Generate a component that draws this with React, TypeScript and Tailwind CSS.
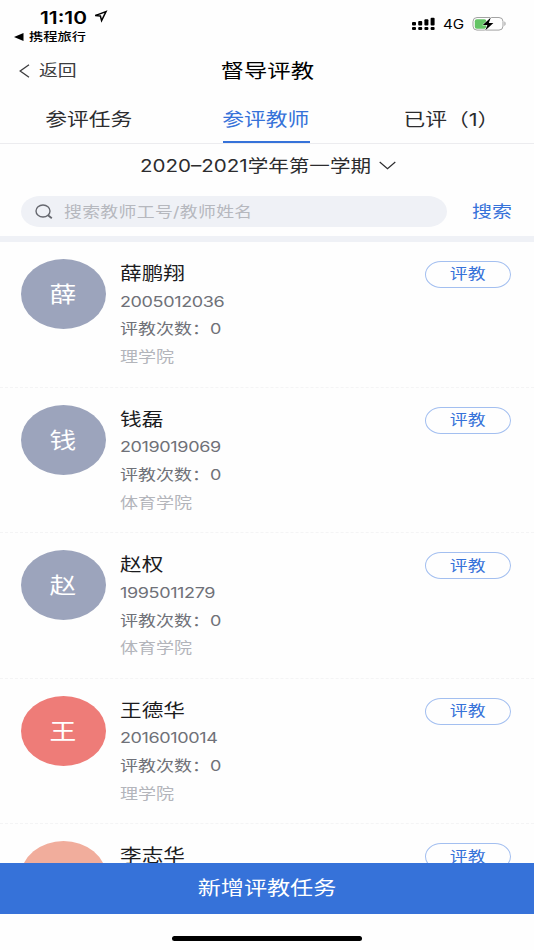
import React from 'react';

interface Teacher {
    name: string;
    color: string;
    id?: string;
    count?: number;
    college?: string;
}

const teachers: Teacher[] = [
    { name: '薛鹏翔', id: '2005012036', count: 0, college: '理学院', color: 'bg-[#9ca4bc]' },
    { name: '钱磊', id: '2019019069', count: 0, college: '体育学院', color: 'bg-[#9ca4bc]' },
    { name: '赵权', id: '1995011279', count: 0, college: '体育学院', color: 'bg-[#9ca4bc]' },
    { name: '王德华', id: '2016010014', count: 0, college: '理学院', color: 'bg-[#ee7c78]' },
    { name: '李志华', color: 'bg-[#f1ad9c]' },
];

const tabs = ['参评任务', '参评教师', '已评（1）'];

// wide lettering, grows from the left edge or from the center
function Wide({ children, center = false, className = '' }: { children: React.ReactNode; center?: boolean; className?: string }) {
    return (
        <span className={`inline-block whitespace-nowrap scale-x-[1.217] ${center ? 'origin-center' : 'origin-left'} ${className}`}>
            {children}
        </span>
    );
}

function StatusBar() {
    return (
        <div className="flex h-[47px] shrink-0 justify-between text-black">
            <div className="pl-[14px] pt-[7px]">
                <div className="flex h-[19px] items-center pl-[26px]">
                    <Wide className="w-[53px] pt-[2px] text-[17.2px] font-semibold leading-[19px]">11:10</Wide>
                    <svg className="h-[13px] w-[15px]" viewBox="0 0 15 13" fill="none" stroke="currentColor" strokeWidth="1.5" strokeLinejoin="miter">
                        <path d="M2.2 5.6 13 1.6 8.6 10.6 7.4 6Z" />
                    </svg>
                </div>
                <div className="flex h-[21px] items-center">
                    <svg className="mr-[5px] h-[8px] w-[10px]" viewBox="0 0 10 8" fill="currentColor">
                        <path d="M0 4 9.5 0V8Z" />
                    </svg>
                    <Wide className="pt-px text-[11.7px] font-medium leading-[20px]">携程旅行</Wide>
                </div>
            </div>
            <div className="flex h-[47px] items-center pr-[27px]">
                <svg className="h-[14px] w-[23px]" viewBox="0 0 23 14" fill="currentColor">
                    <rect x="0" y="5" width="4" height="3.5" rx="1" />
                    <rect x="6.2" y="4" width="4" height="4.5" rx="1" />
                    <rect x="12.4" y="2.3" width="4" height="6.2" rx="1" />
                    <rect x="18.6" y="0.7" width="4" height="7.8" rx="1" />
                    <rect x="0" y="10" width="4" height="3" rx="1" />
                    <rect x="6.2" y="10" width="4" height="3" rx="1" />
                    <rect x="12.4" y="10" width="4" height="3" rx="1" />
                    <rect x="18.6" y="10" width="4" height="3" rx="1" />
                </svg>
                <Wide className="ml-[8px] w-[29px] pt-[4px] text-[12.5px]">4G</Wide>
                <svg className="h-[16px] w-[35px]" viewBox="0 0 35 16">
                    <rect x="1" y="1.5" width="30" height="12.6" rx="4" fill="none" stroke="#a3a3a3" />
                    <rect x="2.8" y="3.2" width="11.5" height="9.6" rx="2" fill="#65c466" />
                    <path d="M32.4 5.5c1.6.4 1.6 4 0 4.4Z" fill="#a3a3a3" />
                    <path d="M18.8 1.4 10.8 8.9h4.6l-2.2 5.6 8.2-7.4h-4.6Z" fill="#000" stroke="#fefefe" strokeWidth="1" paintOrder="stroke" />
                </svg>
            </div>
        </div>
    );
}

function TeacherRow({ teacher }: { teacher: Teacher }) {
    return (
        <li className="flex h-[145.6px] shrink-0 items-start border-b border-dashed border-[#f4f4f5] pl-[21px] pr-[23px] pt-[17px]">
            <div className={`flex h-[70px] w-[85px] shrink-0 items-center justify-center rounded-[50%] pt-px text-[22px] text-white ${teacher.color}`}>
                <Wide center>{teacher.name[0]}</Wide>
            </div>
            <div className="ml-[14px] flex flex-1 flex-col pt-px text-[14.8px] leading-[27.7px] text-[#6f7178]">
                <Wide className="text-[17.8px] text-[#1c1c1e]">{teacher.name}</Wide>
                {teacher.id && (
                    <div className="flex flex-col pt-px">
                        <Wide className="tracking-[-0.3px]">{teacher.id}</Wide>
                        <Wide>评教次数：{teacher.count}</Wide>
                        <Wide className="text-[#b3b5bb]">{teacher.college}</Wide>
                    </div>
                )}
            </div>
            <button className="mt-[2px] flex h-[27px] w-[86px] items-center justify-center rounded-[16px/13.5px] border border-[#a3bff0] text-[14.7px] text-[#3672d9]">
                <Wide center>评教</Wide>
            </button>
        </li>
    );
}

function App() {
    const [active, setActive] = React.useState(1);

    return (
        <div className="flex h-[950px] w-[534px] flex-col overflow-hidden bg-[#fefefe] font-[Inter,'Noto_Sans_CJK_SC',sans-serif] text-[#2c2c2e]">
            <StatusBar />

            <header className="grid h-[48px] shrink-0 grid-cols-3 items-center px-[19px]">
                <button className="flex items-center text-[15.5px] text-[#3c3c3e]">
                    <svg className="mr-[9px] h-[14px] w-[11px]" viewBox="0 0 11 14" fill="none" stroke="currentColor" strokeWidth="1.3">
                        <path d="M10 .8 1.2 7 10 13.2" />
                    </svg>
                    <Wide>返回</Wide>
                </button>
                <h1 className="text-center text-[19.2px] text-black"><Wide center>督导评教</Wide></h1>
            </header>

            <nav className="flex h-[49px] shrink-0 justify-between border-b border-[#ececef] pl-[45px] pr-[36px] text-[17.9px]">
                {tabs.map((tab, i) => (
                    <button
                        key={tab}
                        onClick={() => setActive(i)}
                        className={`flex h-[48px] items-center justify-center border-b-2 pt-[4px] ${i === 2 ? 'w-[94px]' : 'w-[87px]'} ${i === 1 ? '-ml-[4px]' : ''} ${i === active ? 'border-[#3672d9] text-[#3672d9]' : 'border-transparent'}`}
                    >
                        <Wide center>{tab}</Wide>
                    </button>
                ))}
            </nav>

            <div className="flex h-[43px] shrink-0 items-center pl-[140px] text-[16.9px]">
                <Wide className="w-[239px] pt-[2px]">2020–2021学年第一学期</Wide>
                <svg className="h-[9px] w-[17px]" viewBox="0 0 17 9" fill="none" stroke="currentColor" strokeWidth="1.2">
                    <path d="M.7 1 8.5 7.6 16.3 1" />
                </svg>
            </div>

            <div className="flex h-[49px] shrink-0 items-center pl-[21px] pr-[22px]">
                <div className="flex h-[31px] w-[426px] items-center rounded-[19px/15.5px] bg-[#eff1f6] pl-[14px]">
                    <svg className="mr-[11px] h-[15px] w-[18px]" viewBox="0 0 18 15" fill="none" stroke="#66686f" strokeWidth="1.4">
                        <ellipse cx="8" cy="7" rx="7" ry="6" />
                        <path d="m13 11.3 3.8 3" strokeWidth="1.8" />
                    </svg>
                    <Wide className="pt-px text-[14.7px] tracking-[0.25px] text-[#b6b8be]">搜索教师工号/教师姓名</Wide>
                </div>
                <button className="ml-auto w-[40px] text-left text-[16.4px] text-[#3672d9]"><Wide>搜索</Wide></button>
            </div>

            <div className="h-[6px] shrink-0 bg-[#eff1f6]" />

            <ul className="flex min-h-0 flex-1 flex-col overflow-hidden">
                {teachers.map((teacher) => (
                    <TeacherRow key={teacher.name} teacher={teacher} />
                ))}
            </ul>

            <button className="h-[51px] shrink-0 bg-[#3672d9] pt-px text-[19px] text-white">
                <Wide center>新增评教任务</Wide>
            </button>
            <div className="flex h-[36px] shrink-0 justify-center pt-[22px]">
                <div className="h-[5px] w-[190px] rounded-full bg-black" />
            </div>
        </div>
    );
}

export default App;
